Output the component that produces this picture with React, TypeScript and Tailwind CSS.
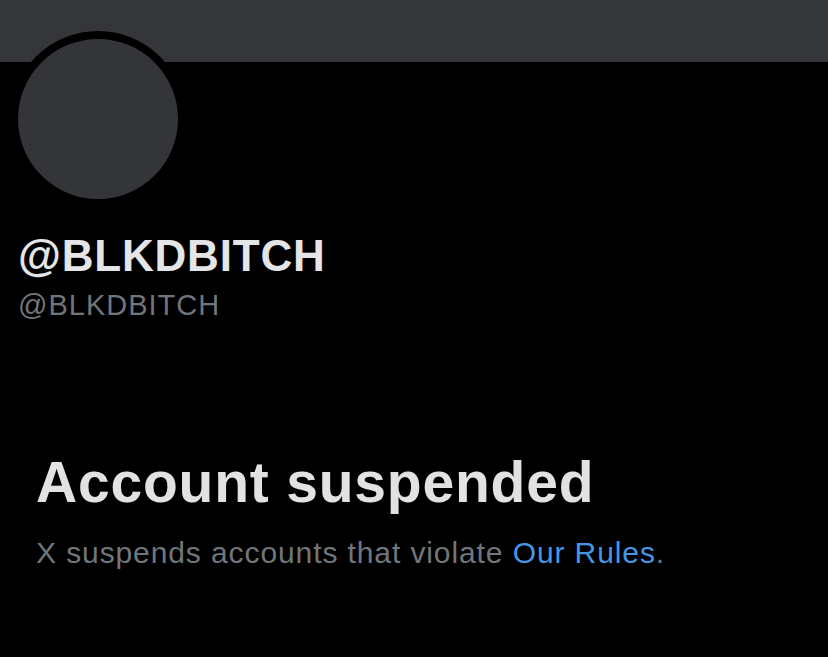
export default function App() {
  return (
    <div className="w-[828px] h-[657px] bg-black overflow-hidden font-['Liberation_Sans',Arial,sans-serif]">
      <div className="h-[62px] bg-[#35363a]" />
      <div className="pl-[10px]">
        <div className="-mt-[31px] w-[176px] h-[176px] rounded-full border-8 border-black bg-[#333539]" />
      </div>
      <div className="pl-[18px]">
        <h1 className="mt-[27px] text-[44px] leading-[44px] font-bold tracking-[0.8px] text-[#e4e5e6]">@BLKDBITCH</h1>
        <div className="mt-[13px] text-[29px] leading-[29px] tracking-[1px] text-[#71767b]">@BLKDBITCH</div>
      </div>
      <div className="pl-[36px]">
        <h2 className="mt-[134px] text-[57px] leading-[57px] font-bold tracking-[0.8px] text-[#e2e2e2]">Account suspended</h2>
        <p className="mt-[27px] text-[30px] leading-[30px] tracking-[0.9px] text-[#71767b]">
          X suspends accounts that violate <a href="#" className="text-[#4597e6]">Our Rules</a>.
        </p>
      </div>
    </div>
  );
}
